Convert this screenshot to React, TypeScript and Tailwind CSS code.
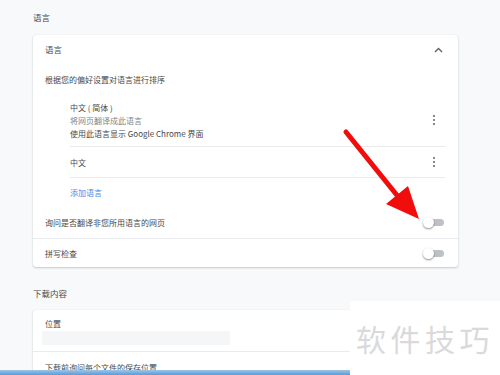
import React from "react";

const Toggle = () => (
  <div className="relative w-[21px] h-[11px] flex items-center">
    <div className="absolute left-[4px] right-0 h-[7px] rounded-full bg-[#bdc1c6]" />
    <div className="absolute left-0 w-[11px] h-[11px] rounded-full bg-white shadow-[0_1px_2px_rgba(0,0,0,0.45)]" />
  </div>
);

const Dots = () => (
  <div className="flex flex-col gap-[2px] items-center w-[4px]">
    <div className="w-[2px] h-[2px] rounded-full bg-[#5f6368]" />
    <div className="w-[2px] h-[2px] rounded-full bg-[#5f6368]" />
    <div className="w-[2px] h-[2px] rounded-full bg-[#5f6368]" />
  </div>
);

export default function App() {
  return (
    <div
      className="relative w-[500px] h-[375px] overflow-hidden bg-[#f8f9fa] text-[#45484c] text-[8px] leading-[13px]"
      style={{ fontFamily: '"Noto Sans CJK SC", "Noto Sans", sans-serif' }}
    >
      <div className="pl-[33px] w-[458px]">
        <div className="h-[35px] flex items-center text-[8.5px]">语言</div>
        <div className="bg-white rounded-[3px] shadow-[0_1px_2px_rgba(60,64,67,0.25),0_0_1px_rgba(60,64,67,0.15)]">
          <div className="h-[29px] flex items-center justify-between pl-[12px] pr-[15px]">
            <span className="text-[8.5px]">语言</span>
            <svg width="9" height="6" viewBox="0 0 9 6">
              <path d="M1 5 L4.5 1.5 L8 5" fill="none" stroke="#5f6368" strokeWidth="1.4" />
            </svg>
          </div>
          <div className="h-[30px] flex items-center pl-[12px]">根据您的偏好设置对语言进行排序</div>
          <div className="pl-[37px] pr-[13px]">
            <div className="h-[53px] flex items-center justify-between border-b border-[#e8eaed]">
              <div className="flex flex-col">
                <span>中文 ( 简体 )</span>
                <span className="text-[#80868b]">将网页翻译成此语言</span>
                <span>使用此语言显示 Google Chrome 界面</span>
              </div>
              <div className="mr-[9px]">
                <Dots />
              </div>
            </div>
            <div className="h-[31px] flex items-center justify-between border-b border-[#e8eaed]">
              <span>中文</span>
              <div className="mr-[9px]">
                <Dots />
              </div>
            </div>
            <div className="h-[29px] flex items-center text-[#4a86e8]">添加语言</div>
          </div>
          <div className="h-[32px] flex items-center justify-between pl-[12px] pr-[14px] border-b border-[#e8eaed]">
            <span>询问是否翻译非您所用语言的网页</span>
            <Toggle />
          </div>
          <div className="h-[28px] flex items-center justify-between pl-[12px] pr-[14px]">
            <span>拼写检查</span>
            <Toggle />
          </div>
        </div>
        <div className="h-[43px] flex items-end pb-[10px] text-[8.5px]">下载内容</div>
        <div className="bg-white rounded-[3px] shadow-[0_1px_2px_rgba(60,64,67,0.25),0_0_1px_rgba(60,64,67,0.15)] h-[80px]">
          <div className="pt-[7px] pb-[6px] border-b border-[#e8eaed]">
            <div className="pl-[12px] h-[13px] flex items-center">位置</div>
            <div className="ml-[9px] mt-[1px] w-[188px] h-[14px] bg-[#f5f6f7]" />
          </div>
          <div className="h-[30px] flex items-center pl-[12px]">下载前询问每个文件的保存位置</div>
        </div>
      </div>

      <svg className="absolute left-0 top-0 pointer-events-none" width="500" height="375" viewBox="0 0 500 375">
        <line x1="346" y1="132" x2="400" y2="199" stroke="#f20d0d" strokeWidth="5" strokeLinecap="round" />
        <polygon points="386,204 408,186 419,219" fill="#f20d0d" />
      </svg>

      <div className="absolute left-[350px] top-[301px] w-[150px] h-[74px] bg-white flex items-center pl-[6px]">
        <span className="text-[30px] leading-none tracking-[4.5px] text-[#dadada]">软件技巧</span>
      </div>
      <div className="absolute left-0 bottom-0 w-[350px] h-[5px] bg-[linear-gradient(to_bottom,#9cc6ea,#5d9ad3)]" />
    </div>
  );
}
